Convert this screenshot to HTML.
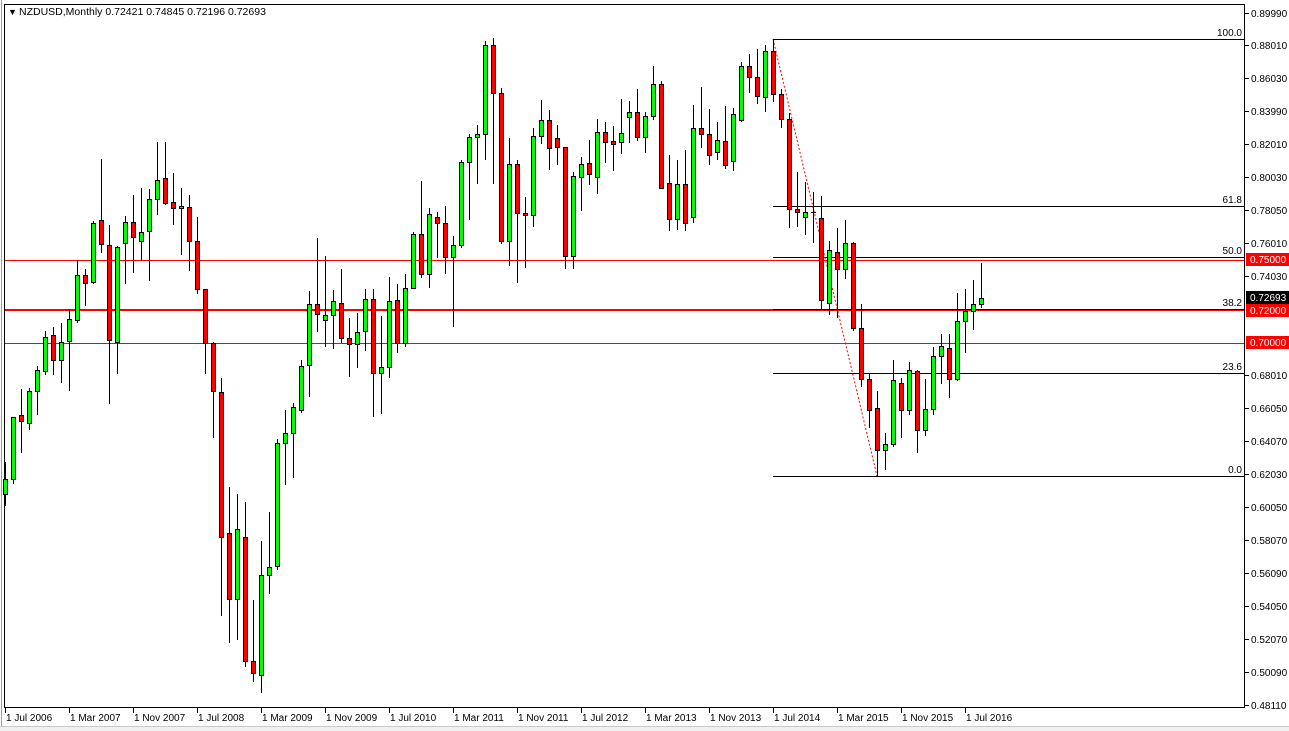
<!DOCTYPE html>
<html><head><meta charset="utf-8"><style>
html,body{margin:0;padding:0;background:#fff;width:1289px;height:731px;overflow:hidden}
svg{display:block}
text{font-family:"Liberation Sans","DejaVu Sans",sans-serif;font-size:10px}
</style></head><body>
<svg id="s" width="1289" height="731" xmlns="http://www.w3.org/2000/svg" shape-rendering="crispEdges">
<rect x="0" y="0" width="1289" height="731" fill="#fff"/>
<rect x="0" y="726" width="1289" height="5" fill="#f0f0f0"/>
<line x1="0" y1="726.5" x2="1289" y2="726.5" stroke="#c8c8c8"/>
<rect x="4.5" y="4.5" width="1240" height="703" fill="#fff" stroke="#000"/>
<line x1="1.5" y1="0" x2="1.5" y2="726" stroke="#a0a0a0"/>
<g id="lv"></g>
<g id="cd"></g>
<text x="8" y="15" style="font-size:9px">▼</text>
<text x="19" y="15" style="font-size:10.5px">NZDUSD,Monthly  0.72421 0.74845 0.72196 0.72693</text>
<g id="ax"></g>
</svg>
<script>
var NS="http://www.w3.org/2000/svg";
function el(p,t,a,txt){var e=document.createElementNS(NS,t);for(var k in a)e.setAttribute(k,a[k]);if(txt!=null)e.textContent=txt;p.appendChild(e);return e;}
var lv=document.getElementById('lv'),cd=document.getElementById('cd'),ax=document.getElementById('ax');
el(lv,'line',{x1:5,y1:260.5,x2:1244,y2:260.5,stroke:'#ff0000'});
el(lv,'line',{x1:5,y1:310,x2:1244,y2:310,stroke:'#ff0000','stroke-width':2});
el(lv,'line',{x1:5,y1:343.5,x2:1244,y2:343.5,stroke:'#ff0000'});
var fib=[[39,'100.0'],[206,'61.8'],[257,'50.0'],[309,'38.2'],[373,'23.6'],[476,'0.0']];
fib.forEach(function(f){el(lv,'line',{x1:773,y1:f[0]+.5,x2:1244,y2:f[0]+.5,stroke:'#000'});
 el(lv,'text',{x:1242,y:f[0]-3,'text-anchor':'end'},f[1]);});
el(lv,'line',{x1:773,y1:39,x2:877,y2:476,stroke:'#ff0000','stroke-dasharray':'2,2','shape-rendering':'auto'});
var D=[
[479,494,462,505,'g'],[417,479,417,483,'g'],[415,421,389,452,'r'],[391,423,388,429,'g'],[370,391,366,414,'g'],
[337,371,331,374,'g'],[335,360,327,374,'r'],[342,360,323,382,'g'],[319,341,309,390,'g'],[275,320,260,322,'g'],
[275,283,269,305,'r'],[223,282,221,283,'g'],[220,244,159,252,'r'],[245,340,225,403,'r'],[247,342,246,373,'g'],
[222,243,216,283,'g'],[222,237,195,272,'r'],[232,241,188,260,'g'],[199,231,189,280,'g'],[180,199,142,214,'g'],
[178,203,142,204,'r'],[202,208,173,224,'r'],[206,208,188,254,'g'],[207,241,195,270,'r'],[241,289,217,293,'r'],
[289,343,289,373,'r'],[343,391,342,437,'r'],[392,537,378,615,'r'],[533,599,487,642,'r'],[529,599,494,639,'g'],
[537,661,502,666,'r'],[661,673,600,681,'r'],[575,675,541,692,'g'],[567,575,512,593,'g'],[443,566,439,569,'g'],
[433,443,410,484,'g'],[407,433,403,477,'g'],[366,410,360,412,'g'],[304,365,291,396,'g'],[304,314,238,331,'r'],
[315,320,256,346,'g'],[301,315,290,348,'g'],[303,338,269,342,'r'],[338,344,318,376,'r'],[332,344,313,367,'g'],
[299,331,289,350,'g'],[299,373,289,416,'r'],[367,373,316,413,'g'],[301,367,277,377,'g'],[300,343,284,352,'r'],
[288,343,274,346,'g'],[234,288,232,288,'g'],[234,274,181,277,'r'],[214,274,208,287,'g'],[217,223,212,257,'r'],
[223,257,206,273,'r'],[245,257,236,326,'g'],[162,245,160,247,'g'],[137,162,134,219,'g'],[134,137,125,183,'g'],
[45,134,41,159,'g'],[45,93,38,183,'r'],[93,241,88,243,'r'],[164,241,138,265,'g'],[164,213,160,282,'r'],
[213,215,197,267,'r'],[136,215,128,226,'g'],[120,136,100,143,'g'],[120,148,110,169,'r'],[138,147,125,164,'r'],
[147,256,147,268,'r'],[176,256,172,268,'g'],[164,177,157,210,'g'],[163,174,140,184,'r'],[132,177,119,193,'g'],
[132,142,122,162,'r'],[141,144,126,170,'r'],[133,142,99,153,'g'],[112,117,101,142,'g'],[112,137,89,140,'r'],
[116,137,112,152,'g'],[84,116,66,119,'g'],[84,188,81,188,'r'],[183,219,155,230,'r'],[184,219,160,229,'g'],
[184,223,150,230,'r'],[128,217,105,222,'g'],[128,134,87,147,'r'],[134,155,109,164,'r'],[140,152,122,159,'g'],
[141,165,106,168,'r'],[114,161,108,170,'g'],[66,120,62,121,'g'],[66,77,54,92,'r'],[77,96,49,103,'r'],
[51,97,45,111,'g'],[51,94,39,101,'r'],[94,119,89,127,'r'],[119,209,113,227,'r'],[209,212,172,226,'r'],
[212,217,182,234,'g'],[212,212,192,242,'d'],[218,300,196,308,'r'],[250,303,241,314,'g'],[252,269,228,317,'r'],
[243,269,220,278,'g'],[243,328,242,330,'r'],[328,379,304,386,'r'],[379,410,373,427,'r'],[408,450,391,476,'r'],
[444,450,433,469,'g'],[380,444,360,446,'g'],[383,410,378,437,'r'],[370,410,362,414,'g'],[371,430,370,452,'r'],
[409,430,379,435,'g'],[356,409,347,414,'g'],[346,356,334,383,'g'],[348,379,334,397,'r'],[321,379,293,380,'g'],
[311,321,289,352,'g'],[304,311,280,329,'g'],[298,304,263,307,'g']];
D.forEach(function(c,i){var x=5+8*i;
 el(cd,'line',{x1:x+.5,y1:c[2],x2:x+.5,y2:c[3]+1,stroke:'#000'});
 if(c[4]=='d'){el(cd,'line',{x1:x-2,y1:c[0]+.5,x2:x+3,y2:c[0]+.5,stroke:'#000'});return;}
 var h=Math.max(1,c[1]-c[0]);
 el(cd,'rect',{x:x-1.5,y:c[0]+.5,width:4,height:h,fill:c[4]=='g'?'#00ff00':'#ff0000',stroke:'#000'});
});
var P=[['0.89990',13],['0.88010',45],['0.86030',78],['0.83990',111],['0.82010',144],['0.80030',177],['0.78050',210],['0.76010',243],['0.74030',276],
['0.68010',375],['0.66050',408],['0.64070',441],['0.62030',474],['0.60050',507],['0.58070',540],['0.56090',573],['0.54050',606],['0.52070',639],['0.50090',672],['0.48110',705]];
P.forEach(function(p){el(ax,'line',{x1:1245,y1:p[1]+.5,x2:1249,y2:p[1]+.5,stroke:'#000'});
 el(ax,'text',{x:1251,y:p[1]+4},p[0]);});
[['0.75000',259,'#ff0000'],['0.72693',297,'#000'],['0.72000',310,'#ff0000'],['0.70000',342,'#ff0000']].forEach(function(b){
 el(ax,'rect',{x:1246,y:b[1]-6,width:43,height:13,fill:b[2]});
 el(ax,'text',{x:1250,y:b[1]+4,fill:'#fff'},b[0]);});
var T=['1 Jul 2006','1 Mar 2007','1 Nov 2007','1 Jul 2008','1 Mar 2009','1 Nov 2009','1 Jul 2010','1 Mar 2011','1 Nov 2011','1 Jul 2012','1 Mar 2013','1 Nov 2013','1 Jul 2014','1 Mar 2015','1 Nov 2015','1 Jul 2016'];
T.forEach(function(t,i){var x=5+64*i;
 el(ax,'line',{x1:x+.5,y1:708,x2:x+.5,y2:713,stroke:'#000'});
 el(ax,'text',{x:x+1,y:721},t);});
</script>
</body></html>
